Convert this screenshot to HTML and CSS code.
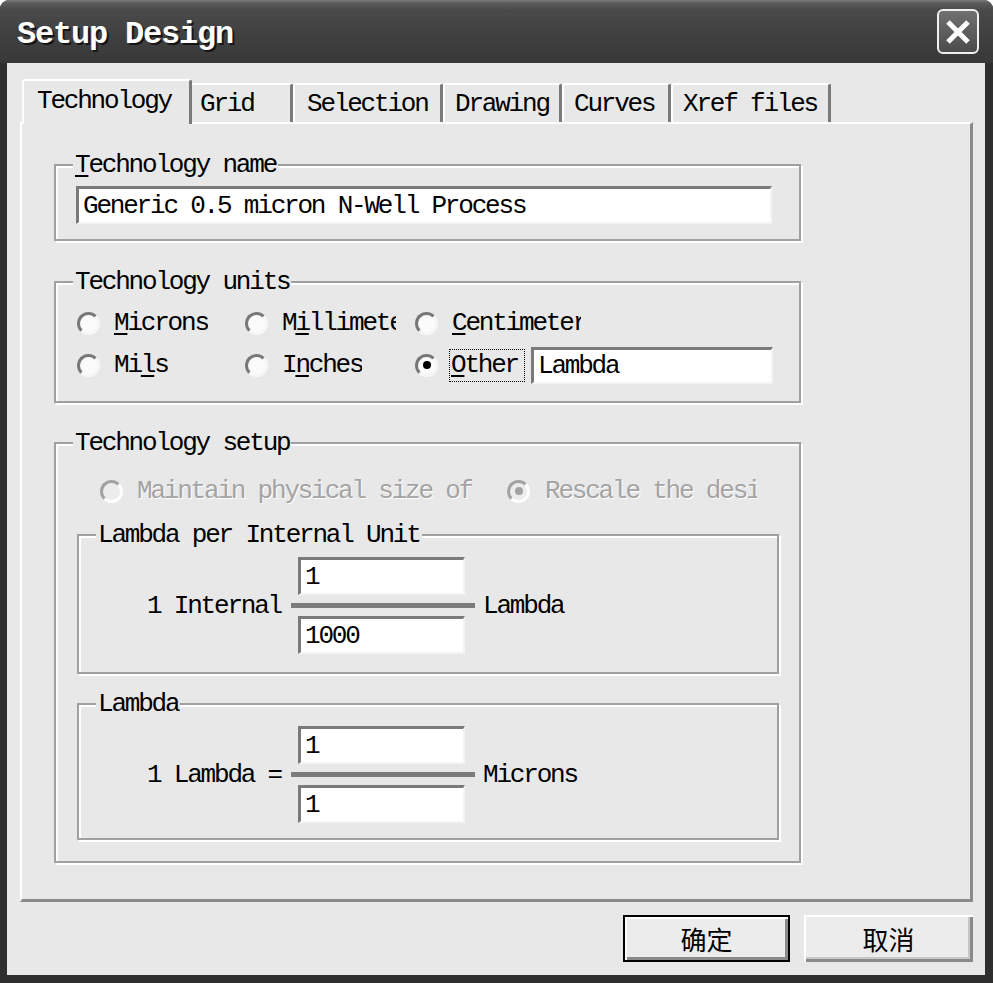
FILE: index.html
```html
<!DOCTYPE html>
<html>
<head>
<meta charset="utf-8">
<title>Setup Design</title>
<link rel="stylesheet" href="styles.css">
</head>
<body>
<div class="window">
  <div class="titlebar">
    <span class="title">Setup Design</span>
    <span class="close">
      <svg width="26" height="26" viewBox="0 0 26 26"><path d="M3 3 L23 23 M23 3 L3 23" stroke="#fff" stroke-width="5" fill="none"/></svg>
    </span>
  </div>
  <div class="client">
    <div class="tabs">
      <div class="tab active t-tech">Technology</div>
      <div class="tab t-grid">Grid</div>
      <div class="tab t-sel">Selection</div>
      <div class="tab t-draw">Drawing</div>
      <div class="tab t-curv">Curves</div>
      <div class="tab t-xref">Xref files</div>
    </div>
    <div class="panel">
      <fieldset class="group g-name">
        <legend><u>T</u>echnology name</legend>
        <div class="edit">Generic 0.5 micron N-Well Process</div>
      </fieldset>

      <fieldset class="group g-units">
        <legend>Technology units</legend>
        <div class="units">
          <div class="opt"><span class="radio"></span><span class="lbl w-mic"><u>M</u>icrons</span></div>
          <div class="opt"><span class="radio"></span><span class="lbl w-mil">M<u>i</u>llimeter</span></div>
          <div class="opt"><span class="radio"></span><span class="lbl w-cent"><u>C</u>entimeter</span></div>
          <div class="opt"><span class="radio"></span><span class="lbl">Mi<u>l</u>s</span></div>
          <div class="opt"><span class="radio"></span><span class="lbl">I<u>n</u>ches</span></div>
          <div class="opt"><span class="radio checked"></span><span class="lbl focus"><u>O</u>ther</span><span class="edit edit-other">Lambda</span></div>
        </div>
      </fieldset>

      <fieldset class="group g-setup">
        <legend>Technology setup</legend>
        <div class="dis-row">
          <div class="opt dis w-maint"><span class="radio"></span><span class="lbl">Maintain physical size of</span></div>
          <div class="opt dis"><span class="radio checked"></span><span class="lbl w-resc">Rescale the design</span></div>
        </div>

        <fieldset class="group inner i-one">
          <legend>Lambda per Internal Unit</legend>
          <div class="frac-row">
            <span class="frac-lbl">1 Internal</span>
            <div class="frac">
              <div class="edit small">1</div>
              <div class="bar"></div>
              <div class="edit small">1000</div>
            </div>
            <span class="unit">Lambda</span>
          </div>
        </fieldset>

        <fieldset class="group inner i-two">
          <legend>Lambda</legend>
          <div class="frac-row">
            <span class="frac-lbl">1 Lambda =</span>
            <div class="frac">
              <div class="edit small">1</div>
              <div class="bar"></div>
              <div class="edit small">1</div>
            </div>
            <span class="unit">Microns</span>
          </div>
        </fieldset>
      </fieldset>
    </div>
    <div class="buttons">
      <button class="btn btn-ok">确定</button>
      <button class="btn btn-cancel">取消</button>
    </div>
  </div>
</div>
</body>
</html>
```

FILE: styles.css
```css
* { box-sizing: border-box; }
html, body { margin: 0; padding: 0; }
body {
  width: 993px;
  height: 983px;
  background: #ffffff;
  overflow: hidden;
  font-family: "Liberation Mono", "DejaVu Sans Mono", monospace;
  font-size: 26px;
  letter-spacing: -2.2px;
  line-height: 28px;
  color: #000;
}

.window {
  width: 993px;
  height: 983px;
  display: flex;
  flex-direction: column;
  background: #2e2e2e;
  border-radius: 9px 9px 0 0;
  overflow: hidden;
}

/* title bar */
.titlebar {
  height: 63px;
  flex: none;
  display: flex;
  align-items: center;
  justify-content: space-between;
  padding: 6px 14px 0 17px;
  background: linear-gradient(to bottom, #7a7a7a 0, #5c5c5c 3px, #4a4a4a 10px, #404040 35px, #383838 63px);
}
.title {
  color: #fff;
  font-family: "Liberation Mono", "DejaVu Sans Mono", monospace;
  font-weight: bold;
  font-size: 32px;
  letter-spacing: -1.2px;
  text-shadow: 2px 2px 0 #151515;
}
.close {
  width: 42px;
  height: 45px;
  margin-top: -6px;
  border: 2px solid #f0f0f0;
  border-radius: 6px;
  background: linear-gradient(to bottom, #707070, #4c4c4c);
  display: flex;
  align-items: center;
  justify-content: center;
}

/* client area */
.client {
  flex: 1;
  margin: 0 8px 8px 7px;
  background: #e8e8e8;
  padding: 16px 12px 0 13px;
  display: flex;
  flex-direction: column;
}

/* tabs */
.tabs {
  display: flex;
  align-items: flex-end;
  height: 43px;
  margin-left: 2px;
}
.tab {
  height: 39px;
  padding: 5px 0 0 10px;
  background: #e8e8e8;
  border-top: 2px solid #fff;
  border-left: 2px solid #fff;
  border-right: 3px solid #7a7a7a;
  border-radius: 3px 3px 0 0;
  white-space: nowrap;
  overflow: hidden;
}
.tab.active {
  height: 45px;
  margin-bottom: -2px;
  margin-right: -2px;
  padding: 6px 0 0 13px;
  position: relative;
  z-index: 1;
}
.t-tech { width: 170px; }
.t-grid { width: 103px; border-left: none; }
.t-sel { width: 150px; padding-left: 12px; }
.t-draw { width: 119px; }
.t-curv { width: 109px; }
.t-xref { width: 160px; }

/* panel */
.panel {
  height: 780px;
  flex: none;
  border-top: 2px solid #fff;
  border-left: 2px solid #fff;
  border-right: 3px solid #8a8a8a;
  border-bottom: 3px solid #8a8a8a;
  padding: 0 0 0 32px;
}

/* group boxes */
.group {
  margin: 0;
  min-width: 0;
  border: 2px solid #a0a0a0;
  box-shadow: inset 2px 2px 0 #fff, 2px 2px 0 #fff;
  width: 747px;
}
.group > legend {
  padding: 0 2px;
  line-height: 28px;
  background: #e8e8e8;
}
u {
  text-decoration-thickness: 2px;
  text-underline-offset: 3px;
}

.g-name { margin-top: 27px; padding: 7px 27px 15px 20px; }
.g-name > legend { margin-left: -3px; }
.g-units { margin-top: 27px; padding: 9px 0 16px 21px; }
.g-units > legend { margin-left: -4px; }
.g-setup { margin-top: 26px; padding: 15px 0 21px 21px; }
.g-setup > legend { margin-left: -4px; }

.inner { width: 702px; }
.inner > legend { margin-left: -51px; }
.i-one { margin-top: 11px; padding: 8px 0 18px 68px; }
.i-two { margin-top: 16px; padding: 8px 0 15px 68px; }

/* edit boxes */
.edit {
  height: 38px;
  display: flex;
  align-items: center;
  padding-left: 4px;
  background: #fff;
  border-top: 3px solid #7a7a7a;
  border-left: 3px solid #7a7a7a;
  border-right: 2px solid #f4f4f4;
  border-bottom: 2px solid #f4f4f4;
  white-space: nowrap;
  overflow: hidden;
}
.edit-other { width: 242px; height: 37px; margin-left: 6px; }

/* radio options */
.units {
  display: grid;
  grid-template-columns: 168px 170px 1fr;
  grid-template-rows: 36px 40px;
  row-gap: 4px;
}
.opt {
  display: flex;
  align-items: center;
}
.radio {
  flex: none;
  width: 23px;
  height: 23px;
  border-radius: 50%;
  background: #fbfbfb;
  border: 3px solid;
  border-color: #777 #f6f6f6 #f6f6f6 #777;
  display: flex;
  align-items: center;
  justify-content: center;
}
.radio.checked::after {
  content: "";
  width: 8px;
  height: 8px;
  border-radius: 50%;
  background: #000;
}
.lbl {
  margin-left: 14px;
  white-space: nowrap;
  overflow: hidden;
}
.w-mil { width: 114px; }
.w-cent { width: 129px; }
.focus {
  margin-left: 11px;
  width: 76px;
  height: 33px;
  padding-left: 1px;
  border: 1px dotted #000;
  display: flex;
  align-items: center;
}

/* disabled row */
.dis-row {
  height: 38px;
  display: flex;
  align-items: center;
  padding-left: 23px;
}
.w-maint { width: 407px; }
.dis .radio {
  background: #ececec;
  border-color: #a2a2a2 #fdfdfd #fdfdfd #a2a2a2;
}
.dis .radio.checked::after { background: #a2a2a2; }
.dis .lbl {
  color: #a4a4a4;
  text-shadow: 1px 1px 0 #fff;
}
.w-resc { width: 212px; margin-left: 15px; }

/* fraction rows */
.frac-row {
  display: flex;
  align-items: center;
}
.frac-lbl { margin-right: 10px; white-space: nowrap; }
.frac {
  width: 184px;
  display: flex;
  flex-direction: column;
  gap: 8px;
}
.edit.small { width: 167px; margin-left: 7px; }
.bar {
  height: 5px;
  background: #7c7c7c;
}
.unit { margin-left: 8px; }

/* buttons */
.buttons {
  display: flex;
  justify-content: flex-end;
  gap: 14px;
  margin-top: 13px;
}
.btn {
  height: 47px;
  font-family: "Noto Sans CJK SC", "Noto Sans", sans-serif;
  font-size: 26px;
  letter-spacing: 0;
  color: #000;
  background: #ececec;
  padding: 0;
  margin: 0;
  cursor: default;
}
.btn-ok {
  width: 167px;
  border: 2px solid #000;
  box-shadow: inset 2px 2px 0 #fff, inset -3px -3px 0 #8a8a8a;
}
.btn-cancel {
  width: 169px;
  border: none;
  box-shadow: inset 2px 2px 0 #fff, inset -3px -3px 0 #8a8a8a, inset -5px -5px 0 #c8c8c8;
}
```
